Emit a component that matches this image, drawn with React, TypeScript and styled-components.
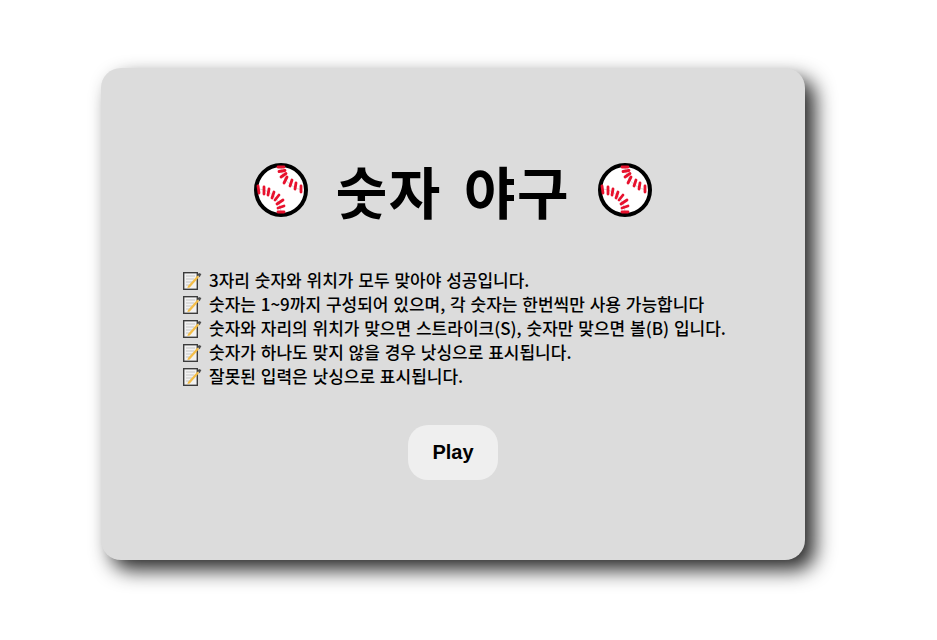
import styled, { createGlobalStyle } from "styled-components";

const GlobalStyle = createGlobalStyle`
  html, body {
    margin: 0;
    padding: 0;
    background: #fff;
    font-family: "Noto Sans CJK KR", "Liberation Sans", sans-serif;
  }
`;

const Page = styled.div`
  width: 906px;
  height: 640px;
  padding-top: 68px;
  box-sizing: border-box;
  display: flex;
  justify-content: center;
  align-items: flex-start;
`;

const Card = styled.div`
  width: 704px;
  height: 492px;
  background: #dcdcdc;
  border-radius: 20px;
  box-shadow: 10px 10px 20px #2a2a2a;
  display: flex;
  flex-direction: column;
  align-items: center;
`;

const Title = styled.h1`
  margin: 84px 0 0;
  height: 76px;
  display: flex;
  align-items: center;
  gap: 28px;
  font-size: 56px;
  font-weight: 700;
  line-height: 76px;
  letter-spacing: 1.5px;
  word-spacing: 8px;
  color: #000;
`;

const RuleList = styled.ul`
  list-style: none;
  margin: 40px 0 0;
  padding: 0 0 0 82px;
  align-self: stretch;
`;

const Rule = styled.li`
  height: 24px;
  display: flex;
  align-items: center;
  gap: 7px;
  font-size: 17px;
  font-weight: 500;
  line-height: 24px;
  word-spacing: 1px;
  color: #000;
  white-space: nowrap;
`;

const PlayButton = styled.button`
  margin-top: 37px;
  width: 90px;
  height: 55px;
  border: none;
  border-radius: 20px;
  background: #efefef;
  color: #000;
  font-family: "Liberation Sans", sans-serif;
  font-size: 20px;
  font-weight: 700;
`;

const rules = [
  "3자리 숫자와 위치가 모두 맞아야 성공입니다.",
  "숫자는 1~9까지 구성되어 있으며, 각 숫자는 한번씩만 사용 가능합니다",
  "숫자와 자리의 위치가 맞으면 스트라이크(S), 숫자만 맞으면 볼(B) 입니다.",
  "숫자가 하나도 맞지 않을 경우 낫싱으로 표시됩니다.",
  "잘못된 입력은 낫싱으로 표시됩니다.",
];

const Baseball = () => (
  <svg width="54" height="54" viewBox="0 0 54 54" fill="none">
    <circle cx="27" cy="27" r="25" fill="#fff" stroke="#000" strokeWidth="4" />
    <path d="M27 4c0 10 8 20 21 23M5 26c11 1 21 10 22 23" stroke="#d8d8d8" strokeWidth="1" />
    <g stroke="#e8112d" strokeWidth="2.8" strokeLinecap="round">
      <path d="M24 4h6M25 8.5l6-1M27 14l5-3.5M30 20l3-6M36 23l2-6M41 26l1-6M47 29v-6" />
      <path d="M4 23l1 7M10 24v7M15 26l-1 6M20 29l-2 6M25 32l-4 5M29 37l-6 4M30 43l-6 2M24 49h6" />
    </g>
  </svg>
);

const Memo = () => (
  <svg width="19" height="19" viewBox="0 0 19 19" fill="none">
    <rect x="0.7" y="1.7" width="13.6" height="16.6" fill="#f2f2f2" stroke="#3c3c3c" strokeWidth="1.4" />
    <path d="M3 5h9M3 8h8M3 11h6M3 14h5" stroke="#c4c4c4" strokeWidth="1" />
    <path d="M5 15l9.5-10.5 1.6 1.6L6.8 16.4l-2.4.6z" fill="#f3bd48" />
    <path d="M14.5 3.5l1.5-1.5 2.4 1-1.8 3.2z" fill="#4a4a4a" />
  </svg>
);

const App = () => {
  return (
    <>
      <GlobalStyle />
      <Page>
        <Card>
          <Title>
            <Baseball />
            숫자 야구
            <Baseball />
          </Title>
          <RuleList>
            {rules.map((rule) => (
              <Rule key={rule}>
                <Memo />
                {rule}
              </Rule>
            ))}
          </RuleList>
          <PlayButton>Play</PlayButton>
        </Card>
      </Page>
    </>
  );
};

export default App;
